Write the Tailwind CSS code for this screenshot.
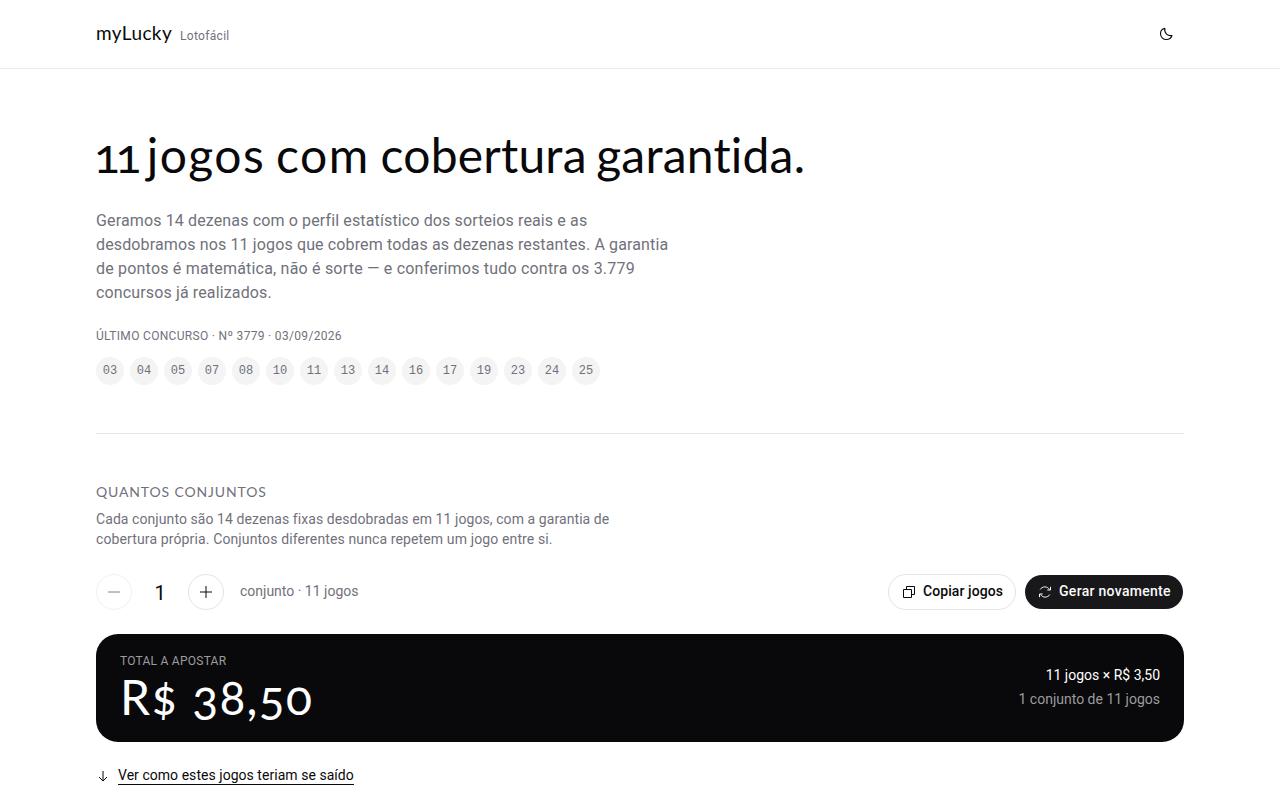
<!DOCTYPE html>
<html lang="pt-BR">
<head>
  <meta charset="UTF-8" />
  <meta name="viewport" content="width=device-width, initial-scale=1.0" />
  <title>myLucky</title>
  <script src="https://cdn.jsdelivr.net/npm/@tailwindcss/browser@4"></script>
</head>
<body class="h-screen overflow-hidden bg-white text-zinc-950 font-['Roboto',sans-serif]">

  <!-- Header -->
  <header class="h-[69px] border-b border-zinc-200/80">
    <div class="mx-auto flex h-full w-[1088px] items-center justify-between">
      <div class="flex items-baseline gap-2 pb-0.5">
        <span class="text-[19px] leading-7 tracking-[0.4px] font-['Lato',sans-serif]">myLucky</span>
        <span class="text-xs tracking-[0.3px] text-zinc-500">Lotofácil</span>
      </div>
      <button class="flex size-9 items-center justify-center" aria-label="Tema">
        <svg class="size-4" viewBox="0 0 16 16" fill="none" stroke="currentColor" stroke-width="1.1" stroke-linejoin="round">
          <path d="M6.800 2.200C4.200 2.800 2.500 5 2.500 7.600c0 3.300 2.600 5.900 5.900 5.900 2.600 0 4.800-1.700 5.600-4-4.200.9-8-2.300-7.200-7.300z" />
        </svg>
      </button>
    </div>
  </header>

  <main class="mx-auto w-[1088px]">
    <!-- Hero -->
    <section class="border-b border-zinc-200 pt-[62px] pb-12">
      <h1 class="text-5xl leading-[48px] tracking-[0.2px] [word-spacing:-3px] whitespace-nowrap oldstyle-nums font-['Lato',sans-serif]"><span class="-ml-0.5 tracking-[-4.500px] [word-spacing:2px]">11 </span><span class="tracking-[1.500px]">jogos com </span>cobertura garantida.</h1>
      <p class="mt-[30px] text-base leading-6 tracking-[0.135px] whitespace-nowrap text-zinc-500">
        Geramos 14 dezenas com o perfil estatístico dos sorteios reais e as<br />
        desdobramos nos 11 jogos que cobrem todas as dezenas restantes. A garantia<br />
        <span class="tracking-[0.2px]">de pontos é matemática, não é sorte — e conferimos tudo contra os 3.779</span><br />
        concursos já realizados.
      </p>
      <p class="mt-[23px] text-xs leading-4 tracking-[0.32px] text-zinc-500">ÚLTIMO CONCURSO · Nº 3779 · 03/09/2026</p>
      <div class="mt-[13px] flex gap-1.5 text-xs text-zinc-500 font-['Liberation_Mono',monospace]">
        <span class="flex size-7 items-center justify-center rounded-full bg-zinc-100">03</span>
        <span class="flex size-7 items-center justify-center rounded-full bg-zinc-100">04</span>
        <span class="flex size-7 items-center justify-center rounded-full bg-zinc-100">05</span>
        <span class="flex size-7 items-center justify-center rounded-full bg-zinc-100">07</span>
        <span class="flex size-7 items-center justify-center rounded-full bg-zinc-100">08</span>
        <span class="flex size-7 items-center justify-center rounded-full bg-zinc-100">10</span>
        <span class="flex size-7 items-center justify-center rounded-full bg-zinc-100">11</span>
        <span class="flex size-7 items-center justify-center rounded-full bg-zinc-100">13</span>
        <span class="flex size-7 items-center justify-center rounded-full bg-zinc-100">14</span>
        <span class="flex size-7 items-center justify-center rounded-full bg-zinc-100">16</span>
        <span class="flex size-7 items-center justify-center rounded-full bg-zinc-100">17</span>
        <span class="flex size-7 items-center justify-center rounded-full bg-zinc-100">19</span>
        <span class="flex size-7 items-center justify-center rounded-full bg-zinc-100">23</span>
        <span class="flex size-7 items-center justify-center rounded-full bg-zinc-100">24</span>
        <span class="flex size-7 items-center justify-center rounded-full bg-zinc-100">25</span>
      </div>
    </section>

    <!-- Controls -->
    <section class="pt-12">
      <h2 class="text-sm leading-5 tracking-[0.85px] text-zinc-500 font-['Lato',sans-serif]">QUANTOS CONJUNTOS</h2>
      <p class="mt-[7px] text-sm leading-5 tracking-[0.075px] whitespace-nowrap text-zinc-500">
        Cada conjunto são 14 dezenas fixas desdobradas em 11 jogos, com a garantia de<br />
        <span class="tracking-[0.125px]">cobertura própria. Conjuntos diferentes nunca repetem um jogo entre si.</span>
      </p>
      <div class="mt-[25px] flex h-9 items-center justify-between">
        <div class="flex items-center">
          <button class="flex size-9 items-center justify-center rounded-full border border-zinc-200 opacity-50" aria-label="Menos">
            <svg class="size-4" viewBox="0 0 16 16" stroke="currentColor"><path d="M2 8h12" /></svg>
          </button>
          <span class="w-14 pt-0.5 text-center text-xl">1</span>
          <button class="flex size-9 items-center justify-center rounded-full border border-zinc-200" aria-label="Mais">
            <svg class="size-4" viewBox="0 0 16 16" stroke="currentColor"><path d="M2 8h12M8 2v12" /></svg>
          </button>
          <span class="ml-4 pb-0.5 text-sm text-zinc-500">conjunto · 11 jogos</span>
        </div>
        <div class="flex items-center gap-[9px] pr-px text-sm font-medium whitespace-nowrap">
          <button class="flex h-9 w-32 items-center rounded-full border border-zinc-200 pl-[13px]">
            <svg class="mr-[7px] size-[14px]" viewBox="0 0 14 14" fill="none" stroke="currentColor"><path d="M1.500 4.500h8v8h-8zM4.500 4.500v-3h8v8h-3" /></svg>
            <span class="pb-0.5 tracking-[0.08px]">Copiar jogos</span>
          </button>
          <button class="flex h-[34px] w-[158px] items-center rounded-full bg-zinc-900 pl-[13px] text-zinc-50">
            <svg class="mr-[7px] size-[14px]" viewBox="0 0 14 14" fill="none" stroke="currentColor"><path d="M2.200 4.500C4.200 1 9.500 1 11.500 4.600M12.500 1.800v3.200H9.300M11.800 9.500C9.800 13 4.500 13 2.500 9.400M1.500 12.200V9h3.200" /></svg>
            <span class="pb-0.5 tracking-[0.3px]">Gerar novamente</span>
          </button>
        </div>
      </div>

      <!-- Total -->
      <div class="mt-6 flex h-[108px] items-center justify-between rounded-[22px] bg-zinc-950 px-6 pb-0.5 text-white">
        <div>
          <p class="text-xs leading-4 tracking-[0.25px] text-[#9c9c9f]">TOTAL A APOSTAR</p>
          <p class="mt-1 text-5xl leading-[48px] tracking-[1.3px] oldstyle-nums font-['Lato',sans-serif]">R$ 38,50</p>
        </div>
        <div class="text-right text-sm leading-6">
          <p>11 jogos × R$ 3,50</p>
          <p class="text-[#9c9c9f]">1 conjunto de 11 jogos</p>
        </div>
      </div>

      <a href="#" class="mt-6 flex items-center text-sm leading-5">
        <svg class="mr-2 size-[14px]" viewBox="0 0 14 14" fill="none" stroke="currentColor"><path d="M7 2v10M3 8l4 4 4-4" /></svg>
        <span class="border-b border-zinc-950 leading-[18px] tracking-[0.04px]">Ver como estes jogos teriam se saído</span>
      </a>
    </section>
  </main>
</body>
</html>
